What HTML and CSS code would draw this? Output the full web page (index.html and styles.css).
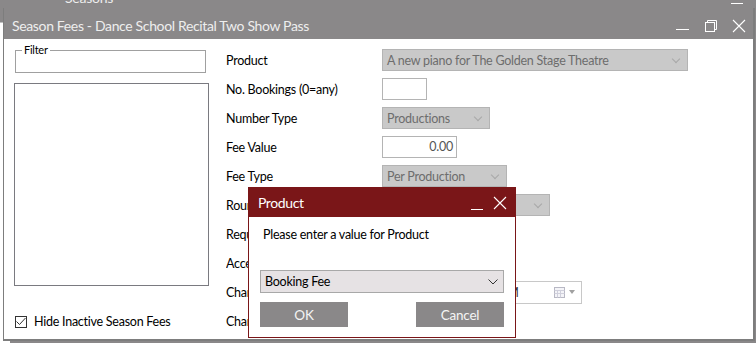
FILE: index.html
```html
<!DOCTYPE html>
<html lang="en">
<head>
    <meta charset="UTF-8" />
    <title>Season Fees</title>
    <link rel="stylesheet" href="styles.css">
</head>
<body>
    <div class="escritorio">
        <!-- ventana de fondo -->
        <div class="ventana-fondo">
            <div class="fondo-titulo">Seasons</div>
            <div class="fondo-min"></div>
            <div class="fondo-cuerpo"></div>
        </div>

        <!-- ventana principal -->
        <div class="ventana">
            <div class="barra-titulo">
                <span class="titulo">Season Fees - Dance School Recital Two Show Pass</span>
                <div class="controles-ventana">
                    <span class="ctl ctl-min"></span>
                    <svg class="ctl" width="14" height="14" viewBox="0 0 14 14">
                        <path d="M3.5 3.5V1.5H12.5V10.5H10.5" fill="none" stroke="#fff" stroke-width="1"/>
                        <rect x="1.5" y="3.5" width="9" height="9" fill="none" stroke="#fff" stroke-width="1"/>
                    </svg>
                    <svg class="ctl" width="14" height="14" viewBox="0 0 14 14">
                        <path d="M1 1L13 13M13 1L1 13" stroke="#fff" stroke-width="1.1"/>
                    </svg>
                </div>
            </div>

            <div class="contenido">
                <div class="panel-izq">
                    <fieldset class="filtro">
                        <legend>Filter</legend>
                    </fieldset>
                    <div class="lista"></div>
                    <label class="casilla">
                        <span class="caja">
                            <svg width="10" height="9" viewBox="0 0 10 9">
                                <path d="M0.5 4.5L3.5 7.5L9.5 1" fill="none" stroke="#333" stroke-width="1"/>
                            </svg>
                        </span>
                        Hide Inactive Season Fees
                    </label>
                </div>

                <div class="formulario">
                    <div class="etiqueta">Product</div>
                    <div class="selector desactivado ancho-prod">A new piano for The Golden Stage Theatre<span class="flecha"></span></div>

                    <div class="etiqueta">No. Bookings (0=any)</div>
                    <div class="entrada ancho-num"></div>

                    <div class="etiqueta">Number Type</div>
                    <div class="selector desactivado ancho-tipo">Productions<span class="flecha"></span></div>

                    <div class="etiqueta">Fee Value</div>
                    <div class="entrada ancho-valor derecha">0.00</div>

                    <div class="etiqueta">Fee Type</div>
                    <div class="selector desactivado ancho-fee">Per Production<span class="flecha"></span></div>

                    <div class="etiqueta">Rounding</div>
                    <div class="selector desactivado ancho-red">Nearest<span class="flecha"></span></div>

                    <div class="etiqueta">Required</div>
                    <div></div>

                    <div class="etiqueta">Accept</div>
                    <div></div>

                    <div class="etiqueta">Charge From</div>
                    <div class="fecha">1/01/2021 12:00:00 AM
                        <span class="calendario">
                            <svg width="11" height="11" viewBox="0 0 11 11">
                                <rect x="0.5" y="0.5" width="10" height="10" fill="#f4f4f8" stroke="#b8b8c4"/>
                                <path d="M0.5 3.5H10.5M3.5 3.5V10.5M6.5 3.5V10.5M0.5 6.5H10.5" stroke="#d0d0dc"/>
                            </svg>
                            <span class="triangulo"></span>
                        </span>
                    </div>

                    <div class="etiqueta">Charge To</div>
                    <div></div>
                </div>
            </div>
        </div>

        <!-- dialogo -->
        <div class="dialogo">
            <div class="dialogo-barra">
                <span>Product</span>
                <div class="controles-dialogo">
                    <span class="ctl-min"></span>
                    <svg width="14" height="14" viewBox="0 0 14 14">
                        <path d="M1 1L13 13M13 1L1 13" stroke="#fff" stroke-width="1.1"/>
                    </svg>
                </div>
            </div>
            <div class="dialogo-cuerpo">
                <p class="pregunta">Please enter a value for Product</p>
                <div class="selector-dialogo">Booking Fee
                    <svg width="10" height="6" viewBox="0 0 10 6">
                        <path d="M0.5 0.5L5 5L9.5 0.5" fill="none" stroke="#333" stroke-width="1"/>
                    </svg>
                </div>
                <div class="botones">
                    <button class="boton">OK</button>
                    <button class="boton">Cancel</button>
                </div>
            </div>
        </div>
    </div>
</body>
</html>
```

FILE: styles.css
```css
* {
    margin: 0;
    padding: 0;
    box-sizing: border-box;
}

body {
    font-family: Lato, "Open Sans", sans-serif;
    font-size: 12.5px;
    letter-spacing: -0.25px;
    color: #000;
    width: 756px;
    height: 343px;
    overflow: hidden;
    background: #ffffff;
}

.escritorio {
    position: relative;
    width: 756px;
    height: 343px;
    overflow: hidden;
}

/* ventana de fondo */
.ventana-fondo {
    position: absolute;
    left: 0;
    top: 0;
    width: 756px;
    height: 343px;
    background: #8a8889;
}

.fondo-titulo {
    position: absolute;
    left: 65px;
    top: -11px;
    color: #eeeeee;
    font-size: 14px;
}

.fondo-min {
    position: absolute;
    left: 731px;
    top: 3px;
    width: 12px;
    border-top: 1px solid #ffffff;
}

.fondo-cuerpo {
    position: absolute;
    left: 0;
    top: 22px;
    width: 10px;
    bottom: 0;
    background: #ffffff;
    border-top: 1px solid #c0c0c0;
}

/* ventana principal */
.ventana {
    position: absolute;
    left: 3px;
    top: 8px;
    width: 752px;
    height: 333px;
    background: #ffffff;
    border: 1px solid #7d7d7d;
    border-top: none;
    border-right-width: 2px;
    border-bottom-width: 2px;
    display: flex;
    flex-direction: column;
}

.barra-titulo {
    height: 31px;
    background: #8a8889;
    display: flex;
    align-items: center;
    justify-content: space-between;
    padding: 4px 0 0 8px;
}

.titulo {
    color: #eeeeee;
    font-size: 14px;
    letter-spacing: -0.35px;
}

.controles-ventana {
    display: flex;
    align-items: center;
    gap: 14px;
    padding-right: 7px;
}

.ctl-min {
    display: block;
    width: 13px;
    height: 9px;
    border-bottom: 1px solid #ffffff;
    margin-right: 1px;
}

.contenido {
    flex: 1;
    display: flex;
}

/* panel izquierdo */
.panel-izq {
    width: 205px;
    padding: 5px 0 0 10px;
    display: flex;
    flex-direction: column;
}

.filtro {
    width: 191px;
    height: 29px;
    border: 1px solid #a0a0a0;
    margin-left: 1px;
    padding: 0;
}

.filtro legend {
    font-size: 11px;
    margin-left: 6px;
    padding: 0 2px;
    line-height: 12px;
}

.lista {
    width: 195px;
    height: 203px;
    border: 1px solid #7a7a80;
    margin-top: 10px;
}

.casilla {
    display: flex;
    align-items: center;
    gap: 7px;
    margin-top: 28px;
    margin-left: 1px;
}

.caja {
    width: 12px;
    height: 12px;
    border: 1px solid #333333;
    display: flex;
    align-items: center;
    justify-content: center;
}

/* formulario */
.formulario {
    margin-left: 17px;
    padding-top: 10px;
    display: grid;
    grid-template-columns: 156px 1fr;
    grid-auto-rows: 22px;
    row-gap: 7px;
    align-items: center;
}

.etiqueta {
    white-space: nowrap;
    overflow: hidden;
}

.selector {
    height: 22px;
    display: flex;
    align-items: center;
    justify-content: space-between;
    padding: 0 4px 0 4px;
    border: 1px solid #b4b4b4;
    white-space: nowrap;
}

.desactivado {
    background: #c9c9c9;
    color: #6d6d6d;
}

.flecha {
    width: 6px;
    height: 6px;
    border-right: 1px solid #a8a8a8;
    border-bottom: 1px solid #a8a8a8;
    transform: rotate(45deg);
    margin: 0 4px 3px 0;
}

.ancho-prod { width: 306px; }
.ancho-tipo { width: 108px; }
.ancho-fee { width: 125px; }
.ancho-red { width: 168px; }
.ancho-num { width: 45px; }
.ancho-valor { width: 75px; }

.entrada {
    height: 22px;
    border: 1px solid #b4b4b4;
    background: #ffffff;
    padding: 0 3px;
    line-height: 20px;
    color: #555555;
}

.derecha {
    text-align: right;
}

.fecha {
    width: 200px;
    height: 23px;
    border: 1px solid #c8c8c8;
    display: flex;
    align-items: center;
    justify-content: space-between;
    padding: 0 6px 0 3px;
    color: #333333;
}

.calendario {
    display: flex;
    align-items: center;
    gap: 4px;
}

.triangulo {
    width: 0;
    height: 0;
    border-left: 3.5px solid transparent;
    border-right: 3.5px solid transparent;
    border-top: 4px solid #a0a0a0;
}

/* dialogo */
.dialogo {
    position: absolute;
    left: 248px;
    top: 187px;
    width: 268px;
    height: 151px;
    background: #ffffff;
    border: 1px solid #7a1618;
    display: flex;
    flex-direction: column;
}

.dialogo-barra {
    height: 29px;
    background: #7a1618;
    color: #ffffff;
    font-size: 14px;
    letter-spacing: -0.4px;
    display: flex;
    align-items: center;
    justify-content: space-between;
    padding: 0 8px 0 9px;
}

.controles-dialogo {
    display: flex;
    align-items: center;
    gap: 9px;
}

.controles-dialogo .ctl-min {
    width: 12px;
    height: 12px;
    margin-top: 2px;
}

.dialogo-cuerpo {
    padding: 9px 11px 0 11px;
    display: flex;
    flex-direction: column;
}

.pregunta {
    margin-left: 3px;
    line-height: 18px;
}

.selector-dialogo {
    margin-top: 26px;
    height: 23px;
    background: #e6e2e4;
    border: 1px solid #a8a8a8;
    display: flex;
    align-items: center;
    justify-content: space-between;
    padding: 0 5px 0 4px;
}

.botones {
    display: flex;
    justify-content: space-between;
    margin-top: 9px;
}

.boton {
    width: 88px;
    height: 25px;
    background: #8a8889;
    color: #f4f4f4;
    border: none;
    font-family: inherit;
    font-size: 13.5px;
    letter-spacing: -0.2px;
}
```
